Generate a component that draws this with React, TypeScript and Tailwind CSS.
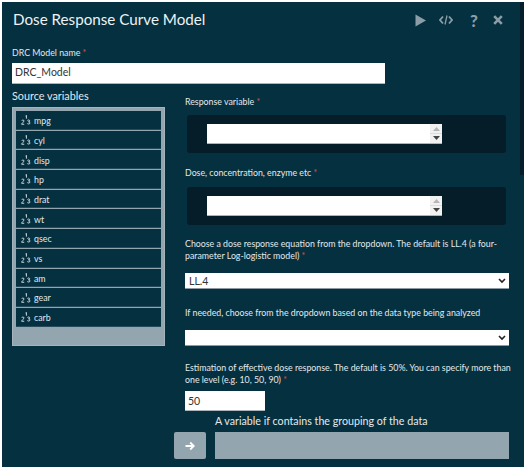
import React from "react";

const vars = ["mpg", "cyl", "disp", "hp", "drat", "wt", "qsec", "vs", "am", "gear", "carb"];

function Req() {
  return <span className="text-[#d9534f]"> *</span>;
}

function Spin() {
  return (
    <div className="flex h-full w-[12px] flex-col items-center justify-center gap-[2px] bg-[#f1f1f1] text-[#777]">
      <svg width="7" height="4" viewBox="0 0 7 4"><path d="M3.5 0L7 4H0z" fill="#b5b5b5" /></svg>
      <div className="h-px w-full bg-[#ddd]" />
      <svg width="7" height="4" viewBox="0 0 7 4"><path d="M0 0h7L3.5 4z" fill="#444" /></svg>
    </div>
  );
}

function NumberBox({ mt }: { mt: string }) {
  return (
    <div className={`ml-[2px] flex h-[38px] w-[319px] items-center rounded-[3px] bg-[#041d29] pl-[20px] ${mt}`}>
      <div className="flex h-[20px] w-[235px] justify-end border-b border-[#aab4ba] bg-white"><Spin /></div>
    </div>
  );
}

function Select({ value }: { value?: string }) {
  return (
    <div className="flex h-[16px] w-[324px] items-center justify-between border-b border-[#8c9ba3] bg-white pl-[4px] pr-[3px] text-[10.5px] text-[#333]">
      <span>{value}</span>
      <svg width="8" height="6" viewBox="0 0 8 6"><path d="M1 1l3 3 3-3" fill="none" stroke="#222" strokeWidth="1.6" /></svg>
    </div>
  );
}

function Numeric() {
  return (
    <svg width="11" height="11" viewBox="0 0 12 12" className="mr-[2px] shrink-0" fill="none" stroke="#dfe6e9" strokeWidth="1">
      <path d="M0.8 6.2c.3-1 2.5-1 2.5.3 0 1-2.4 2-2.6 3.6h2.8" />
      <path d="M5 1l.9-.6v3.6" />
      <path d="M7 6c.5-.8 2.5-.8 2.5.4 0 1-1.3 1-1.4 1 .3 0 1.7.2 1.7 1.3 0 1.4-2.3 1.4-2.9.6" />
    </svg>
  );
}

export default function App() {
  return (
    <div className="h-[470px] w-[526px] overflow-hidden bg-white pl-[2px] pt-[2px] [font-family:Lato,'Noto_Sans',sans-serif]">
      <div className="relative h-[465px] w-[522px] bg-[#05303f] pl-[10px] text-[#e3e9ec]">
        <div className="absolute right-0 top-0 h-[173px] w-[4px] bg-[#041f2b]" />

        <div className="flex h-[36px] items-center justify-between pr-[21px]">
          <div className="pl-[1px] text-[15.2px] leading-none text-[#eef2f4]">Dose Response Curve Model</div>
          <div className="flex items-center text-[#8b9ea7]">
            <svg width="11" height="13" viewBox="0 0 11 13" className="mr-[13px]"><path d="M0.5 0.5L11 6.5L0.5 12.5z" fill="#8b9ea7" /></svg>
            <svg width="14" height="10" viewBox="0 0 14 10" className="mr-[17px]" fill="none" stroke="#8b9ea7" strokeWidth="1.8">
              <path d="M4 1.5L1 5l3 3.5M10 1.5L13 5l-3 3.5" />
              <path d="M8 0.5L6 9.5" strokeWidth="1.3" />
            </svg>
            <span className="mr-[15px] text-[17px] font-black leading-none">?</span>
            <svg width="10" height="10" viewBox="0 0 10 10" stroke="#8b9ea7" strokeWidth="2.6"><path d="M1.2 1.2l7.6 7.6M8.8 1.2L1.2 8.8" /></svg>
          </div>
        </div>

        <div className="mt-[8px] text-[8.8px] leading-[13px]">DRC Model name<Req /></div>
        <div className="mt-[4px] flex h-[21px] w-[373px] items-center border-b border-[#aab4ba] bg-white pl-[3px] text-[10.5px] text-[#333]">DRC_Model</div>

        <div className="flex">
          <div className="w-[173px] shrink-0">
            <div className="mt-[3px] text-[10.8px] leading-[18px]">Source variables</div>
            <div className="mt-[2px] h-[239px] w-[153px] border border-[#a5b3ba] bg-[#93a5ae] px-[3px] pt-[3px]">
              <div className="flex flex-col gap-[1px]">
                {vars.map((v) => (
                  <div key={v} className="flex h-[18.7px] items-center border-b border-[#274b5a] bg-[#05303f] pl-[5px] pt-[2px] text-[8.8px] text-[#e3e9ec]">
                    <Numeric />
                    <span>{v}</span>
                  </div>
                ))}
              </div>
            </div>
          </div>

          <div className="flex-1 text-[8.8px] leading-[12px]">
            <div className="mt-[11px] leading-[13px]">Response variable<Req /></div>
            <NumberBox mt="mt-[7px]" />
            <div className="mt-[13px] leading-[13px]">Dose, concentration, enzyme etc<Req /></div>
            <NumberBox mt="mt-[8px]" />
            <div className="mt-[13px] w-[326px]">Choose a dose response equation from the dropdown. The default is LL.4 (a four-parameter Log-logistic model)<Req /></div>
            <div className="mt-[11px]"><Select value="LL.4" /></div>
            <div className="mt-[18px]">If needed, choose from the dropdown based on the data type being analyzed</div>
            <div className="mt-[11px]"><Select /></div>
            <div className="mt-[16px] w-[326px]">Estimation of effective dose response. The default is 50%. You can specify more than one level (e.g. 10, 50, 90)<Req /></div>
            <div className="mt-[5px] flex h-[20px] w-[80px] items-center border-b border-[#aab4ba] bg-white pl-[3px] text-[10.5px] text-[#333]">50</div>
          </div>
        </div>

        <div className="-mt-[1px] flex justify-end pr-[15px]">
          <div>
            <div className="ml-[41px] text-[10.7px] leading-[22px]">A variable if contains the grouping of the data</div>
            <div className="flex gap-[9px]">
              <div className="flex h-[27px] w-[32px] items-center justify-center rounded-[2px] bg-[#93a5ae]">
                <svg width="10" height="10" viewBox="0 0 10 10" fill="none" stroke="#fff" strokeWidth="1.8"><path d="M0.5 5h8M5.2 1.5L8.8 5 5.2 8.5" /></svg>
              </div>
              <div className="h-[27px] w-[294px] bg-[#93a5ae]" />
            </div>
          </div>
        </div>
      </div>
    </div>
  );
}
